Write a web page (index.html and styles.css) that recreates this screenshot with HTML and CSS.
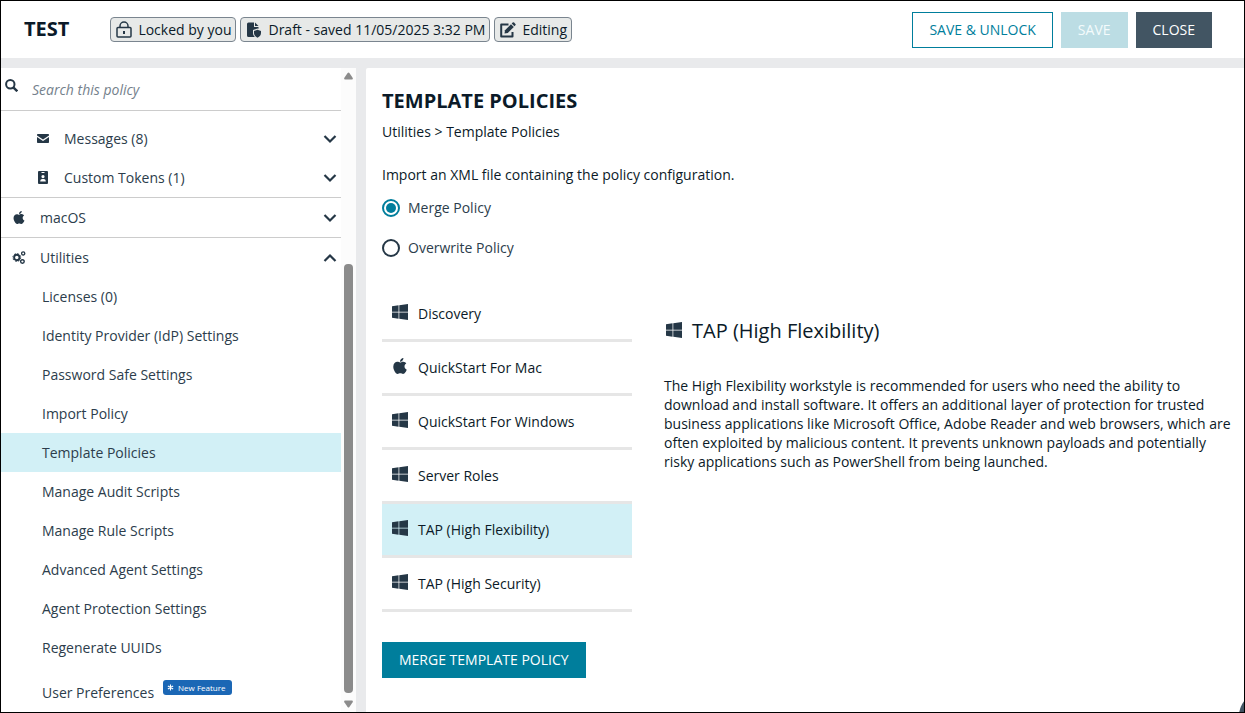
FILE: index.html
```html
<!DOCTYPE html>
<html lang="en">
<head>
    <meta charset="utf-8">
    <title>Template Policies</title>
    <link rel="stylesheet" href="styles.css">
</head>
<body>

<svg class="sprite" aria-hidden="true">
    <symbol id="windows" viewBox="0 32 448 448" preserveAspectRatio="none">
        <path d="M0 93.7l183.6-25.3v177.4H0V93.7zm0 324.6l183.6 25.3V268.4H0v149.9zm203.8 28L448 480V268.4H203.8v177.9zm0-380.6v180.1H448V32L203.8 65.7z"/>
    </symbol>
    <symbol id="apple" viewBox="0 32 384 448">
        <path d="M318.7 268.7c-.2-36.7 16.4-64.4 50-84.8-18.8-26.9-47.2-41.7-84.7-44.6-35.5-2.8-74.3 20.7-88.5 20.7-15 0-49.4-19.7-76.4-19.7C63.3 141.2 4 184.8 4 273.5q0 39.3 14.4 81.2c12.8 36.7 59 126.7 107.2 125.2 25.2-.6 43-17.9 75.8-17.9 31.8 0 48.3 17.9 76.4 17.9 48.6-.7 90.4-82.5 102.6-119.3-65.2-30.7-61.7-90-61.7-91.9zm-56.6-164.2c27.3-32.4 24.8-61.9 24-72.5-24.1 1.4-52 16.4-67.9 34.9-17.5 19.8-27.8 44.3-25.6 71.9 26.1 2 49.9-11.4 69.5-34.3z"/>
    </symbol>
    <symbol id="chevron" viewBox="0 0 14 14">
        <path d="M1.500 4L7 9.500 12.500 4" fill="none" stroke="currentColor" stroke-width="2.200"/>
    </symbol>
</svg>

<div class="page">
    <header class="header">
        <h1 class="policy-name">TEST</h1>
        <div class="badges">
            <span class="badge">
                <svg class="badge-icon" viewBox="0 0 16 18" fill="none" stroke="currentColor" stroke-width="1.500">
                    <rect x="1" y="6.500" width="14" height="9.500" rx="1"/>
                    <path d="M4 6.500V5a4 4 0 0 1 8 0v1.500"/>
                    <path d="M8 10v3" stroke-width="2"/>
                </svg>
                Locked by you
            </span>
            <span class="badge">
                <svg class="badge-icon" viewBox="0 0 16 18" fill="currentColor">
                    <path d="M2.500 1.500h5.500v4.500h4.500V7.800L11.500 7.500 7 9.100V12c0 1.700.8 3.200 2 4H2.500A1.500 1.500 0 0 1 1 14.500V3a1.500 1.500 0 0 1 1.500-1.500z"/>
                    <path d="M9 1.500L12.500 5H9z"/>
                    <path d="M11.500 8.700L15 9.900V12c0 2-1.300 3.800-3.500 4.700C9.300 15.800 8 14 8 12V9.900z"/>
                </svg>
                Draft - saved 11/05/2025 3:32 PM
            </span>
            <span class="badge">
                <svg class="badge-icon" viewBox="0 0 16 18" fill="currentColor">
                    <path d="M8.500 3.500H1.200v12h11.300V11" fill="none" stroke="currentColor" stroke-width="2" stroke-linejoin="round"/>
                    <path d="M4.500 12.500l.5-3.300L11 3.300l2.800 2.800-6 5.900z"/>
                    <path d="M11.700 2.600l1-1a1 1 0 0 1 1.400 0l1.300 1.300a1 1 0 0 1 0 1.400l-1 1z"/>
                </svg>
                Editing
            </span>
        </div>
        <div class="actions">
            <button class="btn btn-outline">SAVE &amp; UNLOCK</button>
            <button class="btn btn-disabled" disabled>SAVE</button>
            <button class="btn btn-dark">CLOSE</button>
        </div>
    </header>

    <div class="columns">
        <aside class="sidebar">
            <div class="sidebar-body">
                <div class="search">
                    <label for="search" aria-label="Search this policy">
                        <svg class="search-icon" viewBox="0 0 13 13" fill="none" stroke="currentColor" stroke-width="2">
                            <circle cx="5.300" cy="5.300" r="4.200"/>
                            <path d="M8.300 8.300l4 4" stroke-width="2.400"/>
                        </svg>
                    </label>
                    <input type="text" id="search" placeholder="Search this policy">
                </div>
                <nav class="tree">
                    <button class="row row-sub">
                        <svg class="row-icon" viewBox="0 0 13 13" fill="currentColor">
                            <path d="M1.300 2h10.400a.8.8 0 0 1 .8.8v.8L6.500 7.600.5 3.600v-.8a.8.8 0 0 1 .8-.8z"/>
                            <path d="M.5 5l6 4 6-4v5.200a.8.8 0 0 1-.8.8H1.300a.8.8 0 0 1-.8-.8z"/>
                        </svg>
                        <span>Messages (8)</span>
                        <svg class="chevron"><use href="#chevron"/></svg>
                    </button>
                    <button class="row row-sub">
                        <svg class="row-icon" viewBox="0 0 13 13" fill="currentColor" fill-rule="evenodd">
                            <path d="M2.500 0h8a1 1 0 0 1 1 1v11a1 1 0 0 1-1 1h-8a1 1 0 0 1-1-1V1a1 1 0 0 1 1-1zM5 1v1h3V1zM6.500 4a1.600 1.600 0 1 0 0 3.200 1.600 1.600 0 0 0 0-3.200zM3.700 10.500h5.600c0-1.700-1-2.500-2-2.500H5.700c-1 0-2 .8-2 2.500z"/>
                        </svg>
                        <span>Custom Tokens (1)</span>
                        <svg class="chevron"><use href="#chevron"/></svg>
                    </button>
                    <button class="row row-top">
                        <svg class="row-icon" fill="currentColor"><use href="#apple"/></svg>
                        <span>macOS</span>
                        <svg class="chevron"><use href="#chevron"/></svg>
                    </button>
                    <button class="row row-top" aria-expanded="true">
                        <svg class="row-icon" viewBox="0 0 13 13" fill="none" stroke="currentColor">
                            <circle cx="4.300" cy="6.500" r="2.700" stroke-width="1.900"/>
                            <circle cx="4.300" cy="6.500" r="3.900" stroke-width="1" stroke-dasharray="1.530 1.530"/>
                            <circle cx="10.700" cy="2.400" r="1.600" stroke-width="1.300"/>
                            <circle cx="9.900" cy="10.500" r="1.800" stroke-width="1.400"/>
                        </svg>
                        <span>Utilities</span>
                        <svg class="chevron chevron-up"><use href="#chevron"/></svg>
                    </button>
                    <a class="row row-link" href="#">Licenses (0)</a>
                    <a class="row row-link" href="#">Identity Provider (IdP) Settings</a>
                    <a class="row row-link" href="#">Password Safe Settings</a>
                    <a class="row row-link" href="#">Import Policy</a>
                    <a class="row row-link selected" href="#">Template Policies</a>
                    <a class="row row-link" href="#">Manage Audit Scripts</a>
                    <a class="row row-link" href="#">Manage Rule Scripts</a>
                    <a class="row row-link" href="#">Advanced Agent Settings</a>
                    <a class="row row-link" href="#">Agent Protection Settings</a>
                    <a class="row row-link" href="#">Regenerate UUIDs</a>
                    <a class="row row-link row-feature" href="#">
                        User Preferences
                        <span class="new-feature">
                            <svg class="star" viewBox="0 0 8 8" stroke="currentColor" stroke-width="1.300">
                                <path d="M4 .5v7M1 2.200l6 3.600M7 2.200L1 5.800"/>
                            </svg>
                            New Feature
                        </span>
                    </a>
                </nav>
            </div>
            <div class="scrollbar" aria-hidden="true">
                <svg class="arrow" viewBox="0 0 9 8"><path d="M3.600 1q.9-1 1.800 0l3.200 4.700Q9.300 7.500 8 7.500H1Q-.3 7.500.4 5.700z"/></svg>
                <div class="track-gap"></div>
                <div class="thumb"></div>
                <svg class="arrow arrow-down" viewBox="0 0 9 8"><path d="M3.600 1q.9-1 1.800 0l3.200 4.700Q9.300 7.500 8 7.500H1Q-.3 7.500.4 5.700z"/></svg>
            </div>
        </aside>

        <main class="main">
            <h2 class="title">TEMPLATE POLICIES</h2>
            <p class="breadcrumb">Utilities &gt; Template Policies</p>
            <p class="intro">Import an XML file containing the policy configuration.</p>
            <div class="option">
                <input type="radio" name="mode" id="merge" checked>
                <label for="merge">Merge Policy</label>
            </div>
            <div class="option">
                <input type="radio" name="mode" id="overwrite">
                <label for="overwrite">Overwrite Policy</label>
            </div>

            <div class="templates">
                <div class="template-list">
                    <button class="template"><svg class="os-icon"><use href="#windows"/></svg>Discovery</button>
                    <button class="template"><svg class="os-icon"><use href="#apple"/></svg>QuickStart For Mac</button>
                    <button class="template"><svg class="os-icon"><use href="#windows"/></svg>QuickStart For Windows</button>
                    <button class="template"><svg class="os-icon"><use href="#windows"/></svg>Server Roles</button>
                    <button class="template selected"><svg class="os-icon"><use href="#windows"/></svg>TAP (High Flexibility)</button>
                    <button class="template"><svg class="os-icon"><use href="#windows"/></svg>TAP (High Security)</button>
                </div>
                <section class="detail">
                    <h3 class="detail-title"><svg class="os-icon"><use href="#windows"/></svg>TAP (High Flexibility)</h3>
                    <p>The High Flexibility workstyle is recommended for users who need the ability to download and install software. It offers an additional layer of protection for trusted business applications like Microsoft Office, Adobe Reader and web browsers, which are often exploited by malicious content. It prevents unknown payloads and potentially risky applications such as PowerShell from being launched.</p>
                </section>
            </div>

            <button class="btn btn-primary">MERGE TEMPLATE POLICY</button>
        </main>
    </div>

    <button class="help" aria-label="Help"></button>
</div>

</body>
</html>
```
FILE: styles.css
```css
* {
    box-sizing: border-box;
}
body {
    margin: 0;
    font-family: "Open Sans", sans-serif;
    font-size: 14px;
    line-height: 19px;
    color: #0b1a28;
}
h1, h2, h3, p {
    margin: 0;
}
button, input {
    font: inherit;
    color: inherit;
}
button {
    cursor: pointer;
}
.sprite {
    display: none;
}
.page {
    position: relative;
    display: flex;
    flex-direction: column;
    height: 100vh;
    border: 1px solid #000;
    background-color: #e9eaec;
    overflow: hidden;
}

/* header */
.header {
    display: flex;
    align-items: center;
    height: 57px;
    flex-shrink: 0;
    padding: 0 32px 0 23px;
    background-color: #fff;
}
.policy-name {
    font-size: 20px;
    line-height: 26px;
    padding-bottom: 2px;
    font-weight: 700;
}
.badges {
    display: flex;
    gap: 4px;
    margin-left: 41px;
}
.badge {
    display: flex;
    align-items: center;
    gap: 6px;
    height: 25px;
    padding: 0 4px 0 5px;
    border: 1px solid #7a858f;
    border-radius: 4px;
    background-color: #e7e9e8;
    white-space: nowrap;
}
.badge-icon {
    width: 16px;
    height: 18px;
    color: #253746;
}
.actions {
    display: flex;
    gap: 8px;
    margin-left: auto;
}
.btn {
    height: 36px;
    padding: 0 16px 1px;
    border: 1px solid transparent;
    white-space: nowrap;
}
.btn-outline {
    border-color: #007e9c;
    background-color: #fff;
    color: #007e9c;
}
.btn-disabled {
    border-color: #bcdde4;
    background-color: #bcdde4;
    color: #f4fbfc;
}
.btn-dark {
    border-color: #425563;
    background-color: #425563;
    color: #fff;
}
.btn-primary {
    border-color: #007e9c;
    background-color: #007e9c;
    color: #fff;
}

.columns {
    display: flex;
    flex: 1;
    gap: 10px;
    min-height: 0;
    margin-top: 10px;
}

/* sidebar */
.sidebar {
    display: flex;
    width: 355px;
    flex-shrink: 0;
    background-color: #fff;
    color: #2c3d4c;
    overflow: hidden;
}
.sidebar-body {
    flex: 1;
}
.search {
    display: flex;
    height: 43px;
    padding: 0 4px;
    border-bottom: 1px solid #ccc;
}
.search-icon {
    display: block;
    width: 13px;
    height: 13px;
    margin-top: 11px;
    color: #253746;
}
.search input {
    flex: 1;
    padding: 0 0 0 14px;
    border: none;
    outline: none;
    background: none;
}
.search input::placeholder {
    font-style: italic;
    color: #74818c;
    opacity: 1;
}
.tree {
    padding-top: 8px;
}
.row {
    display: flex;
    align-items: center;
    width: 100%;
    height: 39px;
    padding: 0 4px 0 11px;
    border: none;
    background: none;
    color: inherit;
    text-align: left;
    text-decoration: none;
}
.row-sub {
    padding-left: 35px;
}
.row-top {
    height: 40px;
    border-top: 1px solid #ccc;
}
.row-link {
    padding-left: 41px;
}
.row-feature {
    height: 45px;
    padding-top: 6px;
}
.row-icon {
    width: 14px;
    height: 13px;
    margin-right: 14px;
    color: #253746;
}
.row-top .row-icon {
    height: 13px;
}
.chevron {
    width: 14px;
    height: 14px;
    margin-left: auto;
    color: #253746;
}
.chevron-up {
    transform: rotate(180deg);
}
.selected {
    background-color: #d2f0f6;
}
.new-feature {
    display: flex;
    align-items: center;
    gap: 4px;
    height: 15px;
    margin: 0 0 10px 9px;
    padding: 0 7px 0 4px;
    border-radius: 3px;
    background-color: #1b67b5;
    color: #fff;
    font-size: 8px;
    line-height: 15px;
}
.star {
    width: 7px;
    height: 7px;
}
.scrollbar {
    display: flex;
    flex-direction: column;
    align-items: center;
    width: 15px;
    padding: 4px 0;
    background-color: #fcfcfc;
}
.arrow {
    width: 9px;
    height: 8px;
    fill: #8b8b8b;
}
.arrow-down {
    margin-top: 7px;
    transform: rotate(180deg);
}
.track-gap {
    flex: 3;
}
.thumb {
    flex: 7;
    width: 9px;
    border-radius: 4px;
    background-color: #8b8b8b;
}

/* content */
.main {
    flex: 1;
    padding: 19px 8px 0 16px;
    border-top-left-radius: 2px;
    background-color: #fff;
}
.title {
    font-size: 20px;
    line-height: 28px;
    font-weight: 700;
}
.breadcrumb {
    margin-top: 7px;
}
.intro {
    margin: 24px 0 4px;
}
.option {
    display: flex;
    align-items: center;
    gap: 8px;
    height: 40px;
    color: #2c3d4c;
}
.option label {
    padding-bottom: 1px;
}
.option input {
    appearance: none;
    width: 18px;
    height: 18px;
    margin: 0;
    padding: 2px;
    border: 2px solid #253746;
    border-radius: 50%;
    background-clip: content-box;
}
.option input:checked {
    border-color: #007e9c;
    background-color: #007e9c;
}
.templates {
    display: flex;
    gap: 32px;
    margin: 20px 0 30px;
}
.template-list {
    width: 250px;
    flex-shrink: 0;
}
.template {
    display: flex;
    align-items: center;
    gap: 10px;
    width: 100%;
    height: 54px;
    padding: 0 10px;
    border: none;
    border-bottom: 3px solid #e6e6e6;
    background-color: #fff;
    text-align: left;
}
.template.selected {
    background-color: #d2f0f6;
}
.os-icon {
    width: 16px;
    height: 16px;
    margin-bottom: 3px;
    fill: #253746;
}
.detail {
    flex: 1;
    padding-top: 29px;
}
.detail-title {
    display: flex;
    align-items: center;
    gap: 10px;
    margin-bottom: 31px;
    padding-left: 2px;
    font-size: 20px;
    line-height: 28px;
    font-weight: 400;
}

/* round button peeking out of the corner */
.help {
    position: absolute;
    right: -43px;
    bottom: -28px;
    width: 48px;
    height: 48px;
    border: none;
    border-radius: 50%;
    background-color: #425563;
}
```
